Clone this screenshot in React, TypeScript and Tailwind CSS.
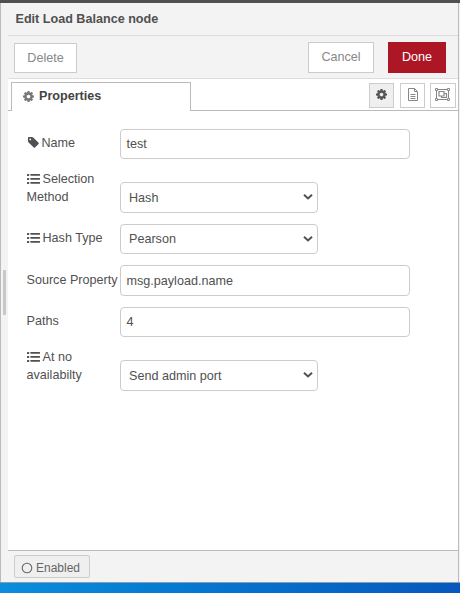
import React from "react";

const COG =
  "M1024 896q0-106-75-181t-181-75-181 75-75 181 75 181 181 75 181-75 75-181zm512-109v222q0 12-8 23t-20 13l-185 28q-19 54-39 91 35 50 107 138 10 12 10 25t-9 23q-27 37-99 108t-94 71q-12 0-26-9l-138-108q-44 23-91 38-16 136-29 186-7 28-36 28h-222q-14 0-24.5-8.5t-11.5-21.5l-28-184q-49-16-90-37l-141 107q-10 9-25 9-14 0-25-11-126-114-165-168-7-10-7-23 0-12 8-23 15-21 51-66.5t54-70.5q-27-50-41-99l-183-27q-13-2-21-12.5t-8-23.5v-222q0-12 8-23t19-13l186-28q14-46 39-92-40-57-107-138-10-12-10-24 0-10 9-23 26-36 98.5-107.5t94.5-71.5q13 0 26 10l138 107q44-23 91-38 16-136 29-186 7-28 36-28h222q14 0 24.5 8.5t11.5 21.5l28 184q49 16 90 37l142-107q9-9 24-9 13 0 25 10 129 119 165 170 7 8 7 22 0 12-8 23-15 21-51 66.5t-54 70.5q26 50 41 98l183 28q13 2 21 12.5t8 23.5z";
const TAG =
  "M576 448q0-53-37.5-90.5t-90.5-37.5-90.5 37.5-37.5 90.5 37.5 90.5 90.5 37.5 90.5-37.5 37.5-90.5zm1067 576q0 53-37 90l-491 492q-39 37-91 37-53 0-90-37l-715-716q-38-37-64.5-101t-26.5-117v-416q0-52 38-90t90-38h416q53 0 117 26.5t102 64.5l715 714q37 39 37 91z";

function Cog({ className }: { className: string }) {
  return (
    <svg viewBox="0 128 1536 1536" className={className} fill="currentColor">
      <path d={COG} />
    </svg>
  );
}

function ListIcon() {
  return (
    <svg width="13" height="12" viewBox="0 0 13 12" className="mr-[3px] inline-block align-[-2px]" fill="currentColor">
      {[1, 5, 9].map((y) => (
        <React.Fragment key={y}>
          <rect x="0" y={y} width="2.2" height="2" rx="0.5" />
          <rect x="3.5" y={y} width="9.5" height="1.8" rx="0.2" />
        </React.Fragment>
      ))}
    </svg>
  );
}

function FileIcon() {
  return (
    <svg width="12" height="14" viewBox="0 0 12 14" fill="none" stroke="currentColor">
      <path d="M1.5.5h6l3 3v9h-9zM7.5.5v3h3M3.5 6.5h5M3.5 8.5h5M3.5 10.5h5" />
    </svg>
  );
}

function GroupIcon() {
  return (
    <svg width="16" height="14" viewBox="0 0 16 14" fill="none" stroke="currentColor">
      <path d="M2 1.5h12M2 11.5h12M1.5 2v10M13.5 2v10" />
      <path d="M.5.5h2v2h-2zM12.5.5h2v2h-2zM.5 10.5h2v2h-2zM12.5 10.5h2v2h-2z" fill="white" />
      <path d="M4 3.5h5v4.500h-5zM9 5.500h2.500v4h-5v-1.500" strokeWidth="1.200" />
    </svg>
  );
}

function Field({ label, icon, gap, children }: { label: string; icon?: React.ReactNode; gap: string; children: React.ReactNode }) {
  return (
    <div className={`flex items-center ${gap}`}>
      <div className="w-[93.5px] shrink-0 whitespace-nowrap pb-[2px]">
        {icon}
        {label}
      </div>
      {children}
    </div>
  );
}

function TallField({ first, second, gap, children }: { first: string; second: string; gap: string; children: React.ReactNode }) {
  return (
    <div className={`flex h-[43px] items-end ${gap}`}>
      <div className="h-[43px] w-[93.5px] shrink-0 whitespace-nowrap">
        <ListIcon />
        {first}
        <br />
        {second}
      </div>
      {children}
    </div>
  );
}

function TextBox({ value, height }: { value: string; height: string }) {
  return <div className={`flex w-[290px] items-center rounded-[4px] border border-[#ccc] bg-white px-[5.5px] ${height}`}>{value}</div>;
}

function SelectBox({ value, height }: { value: string; height: string }) {
  return (
    <div className={`flex w-[198px] items-center justify-between rounded-[4px] border border-[#ccc] bg-white pl-2 pr-1 ${height}`}>
      {value}
      <svg width="10" height="6" viewBox="0 0 10 6" className="mb-px" fill="none" stroke="#505050" strokeWidth="2">
        <path d="M1 .8l4 3.7 4-3.700" />
      </svg>
    </div>
  );
}

export default function App() {
  return (
    <div className="flex h-[593px] w-[460px] flex-col overflow-hidden bg-[#f3f3f3] font-['Liberation_Sans',Arial,sans-serif] text-[12.6px] leading-[18px] text-[#505050]">
      <div className="h-[3px] shrink-0 bg-[#505050]" />
      <div className="flex h-[579px] shrink-0">
        <div className="flex w-2 shrink-0 items-center border-l border-[#bbb] pl-[2px]">
          <div className="h-[45px] w-[3px] bg-[#c8c8c8]" />
        </div>
        <div className="flex w-[451px] flex-col border-r border-[#bbb]">
          <div className="flex h-[33px] shrink-0 items-center border-b border-[#ddd] pl-[7.5px] pb-px font-bold">Edit Load Balance node</div>
          <div className="flex h-[43px] shrink-0 items-start border-b border-[#ddd] pl-[6px] pt-[6px] text-[#888]">
            <div className="mt-[1px] flex h-[30px] w-[63px] items-center justify-center border border-[#ccc] bg-white pb-px">Delete</div>
            <div className="ml-auto flex h-[31px] w-[66px] items-center justify-center border border-[#ccc] bg-white pb-[2px]">Cancel</div>
            <div className="ml-[14px] mr-3 flex h-[31px] w-[58px] items-center justify-center bg-[#ad1625] pb-[2px] text-white">Done</div>
          </div>
          <div className="flex h-8 shrink-0 bg-white">
            <div className="w-[3px] border-b border-[#bbb]" />
            <div className="mt-[3px] flex w-[180px] items-center border border-b-0 border-[#bbb] pb-[2px] pl-[11px] font-bold text-[#444]">
              <Cog className="mr-[5px] h-[11px] w-[11px] text-[#777]" />
              Properties
            </div>
            <div className="flex flex-1 justify-end border-b border-[#bbb] pr-[2px] pt-1">
              <div className="mr-[6px] flex h-[25px] w-[25px] items-center justify-center border border-[#ccc] bg-[#efefef] pb-[2px] text-[#555]">
                <Cog className="h-[11px] w-[11px]" />
              </div>
              <div className="mr-[5px] flex h-[25px] w-[25px] items-center justify-center border border-[#ccc] pb-[2px] text-[#888]">
                <FileIcon />
              </div>
              <div className="flex h-[25px] w-[26px] items-center justify-center border border-[#ccc] pb-[2px] text-[#888]">
                <GroupIcon />
              </div>
            </div>
          </div>
          <div className="flex-1 bg-white pl-[18.5px] pt-[18px]">
            <Field
              label="Name"
              gap="mb-[11px]"
              icon={
                <svg viewBox="0 128 1664 1536" className="mr-[3px] inline-block h-[11px] w-3 align-[-1px]" fill="currentColor">
                  <path d={TAG} />
                </svg>
              }
            >
              <TextBox value="test" height="h-[30px]" />
            </Field>
            <TallField first="Selection" second="Method" gap="mb-[11px]">
              <SelectBox value="Hash" height="h-[31px]" />
            </TallField>
            <Field label="Hash Type" gap="mb-[11px]" icon={<ListIcon />}>
              <SelectBox value="Pearson" height="h-[30px]" />
            </Field>
            <Field label="Source Property" gap="mb-[11px]">
              <TextBox value="msg.payload.name" height="h-[31px]" />
            </Field>
            <Field label="Paths" gap="mb-[11px]">
              <TextBox value="4" height="h-[30px]" />
            </Field>
            <TallField first="At no" second="availabilty" gap="">
              <SelectBox value="Send admin port" height="h-[31px]" />
            </TallField>
          </div>
          <div className="h-8 shrink-0 border-t border-[#bbb] pl-[6px] pt-1">
            <div className="flex h-[23px] w-[76px] items-center rounded-[2px] border border-[#ccc] bg-[#efefef] pl-[6px] pt-[2px] text-[12px] text-[#666]">
              <svg width="12" height="12" viewBox="0 0 12 12" className="mr-[3px]" fill="none" stroke="currentColor" strokeWidth="1.1">
                <circle cx="6" cy="6" r="4.8" />
              </svg>
              Enabled
            </div>
          </div>
        </div>
      </div>
      <div className="h-[11px] shrink-0 border-t border-[#8a9db0] bg-linear-to-r from-[#0a8ddd] to-[#0758bd]" />
    </div>
  );
}
